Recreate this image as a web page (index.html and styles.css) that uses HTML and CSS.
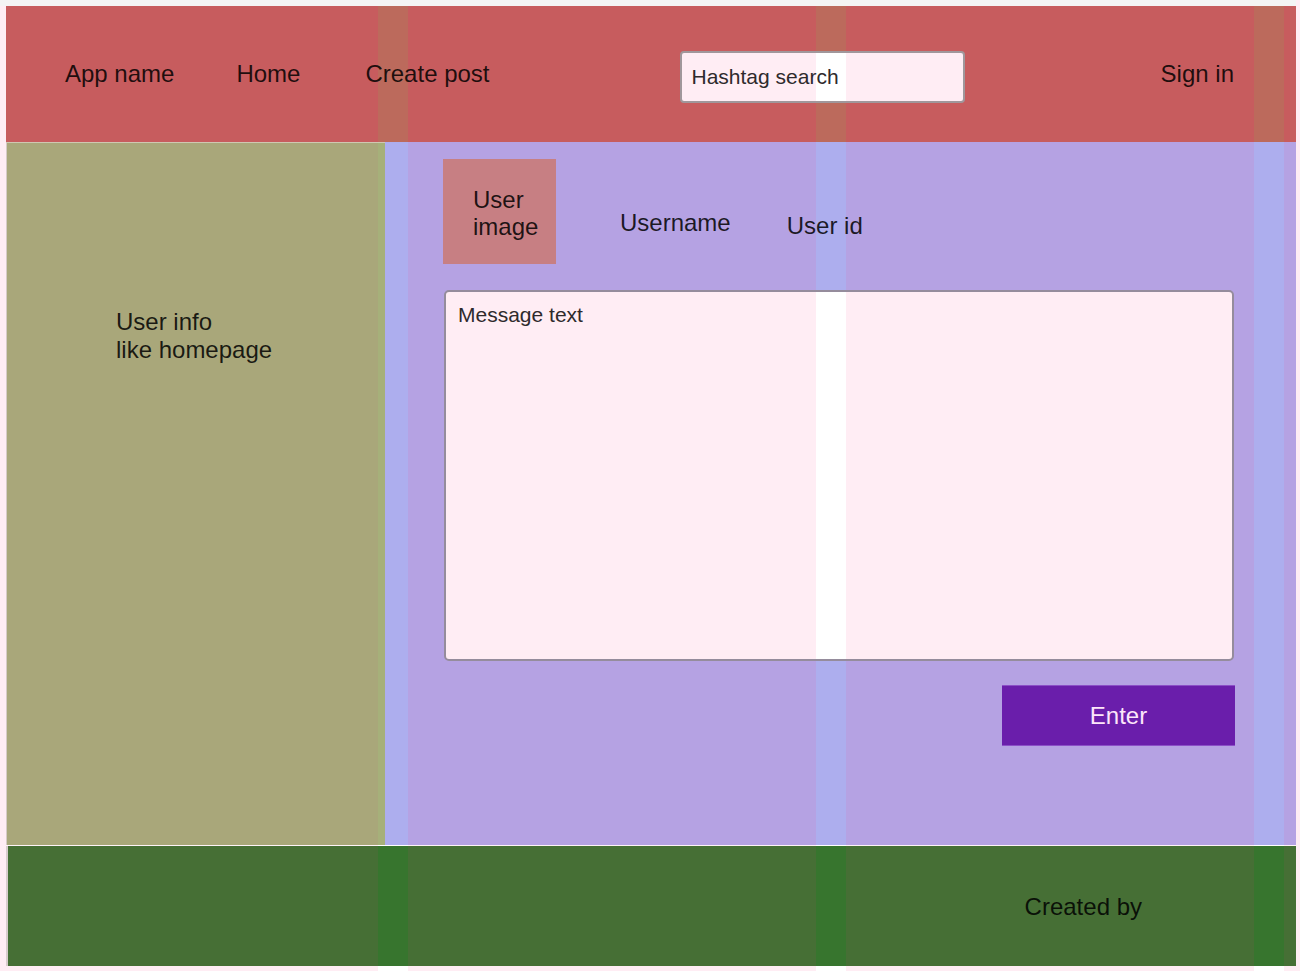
FILE: index.html
```html
<!DOCTYPE html>
<html lang="en">
<head>
<meta charset="utf-8">
<title>Create post</title>
<link rel="stylesheet" href="styles.css">
</head>
<body class="striped page-bg">
  <div class="topbar"></div>
  <div class="page">
    <header class="header striped">
      <a href="#" class="nav-item brand">App name</a>
      <a href="#" class="nav-item nav-home">Home</a>
      <a href="#" class="nav-item nav-create">Create post</a>
      <input class="search striped" type="text" placeholder="Hashtag search">
      <a href="#" class="nav-item signin">Sign in</a>
    </header>
    <div class="main">
      <aside class="sidebar striped">
        <p class="sidebar-text">User info<br>like homepage</p>
      </aside>
      <section class="content striped">
        <div class="post-head">
          <div class="avatar">User<br>image</div>
          <div class="username">Username</div>
          <div class="userid">User id</div>
        </div>
        <textarea class="message striped" placeholder="Message text"></textarea>
        <button class="enter" type="button">Enter</button>
      </section>
    </div>
    <footer class="footer striped">
      <span class="credits">Created by</span>
    </footer>
  </div>
</body>
</html>
```

FILE: styles.css
```css
html, body {
  margin: 0;
  padding: 0;
}

body {
  font-family: "Liberation Sans", Arial, sans-serif;
  color: rgba(0, 0, 0, 0.85);
  height: 971px;
  overflow: hidden;
}

/* column-grid overlay drawn into each surface */
.striped {
  background: linear-gradient(90deg,
      var(--base) 0 378px,
      var(--stripe) 378px 408px,
      var(--base) 408px 816px,
      var(--stripe) 816px 846px,
      var(--base) 846px 1254px,
      var(--stripe) 1254px 1284px,
      var(--base) 1284px) fixed;
}

.page-bg {
  --base: #ffedf4;
  --stripe: #ffffff;
}

.topbar {
  height: 6px;
  width: 1296px;
  background: #f4f4f4;
}

.page {
  margin-left: 6px;
  width: 1290px;
}

/* header */
.header {
  --base: #c75c5e;
  --stripe: #bc6a5c;
  height: 136px;
  display: flex;
  align-items: center;
  padding: 0 62px 0 59px;
  box-sizing: border-box;
}

.nav-item {
  font-size: 24px;
  color: rgba(0, 0, 0, 0.85);
  text-decoration: none;
  white-space: nowrap;
}

.nav-home { margin-left: 62px; }
.nav-create { margin-left: 65px; }
.signin { margin-left: auto; }

.search {
  --base: #ffedf4;
  --stripe: #ffffff;
  align-self: flex-start;
  margin: 45px 0 0 190px;
  width: 285px;
  height: 52px;
  box-sizing: border-box;
  border: 2px solid #a0979b;
  border-radius: 4px;
  padding: 0 10px;
  font-family: "Liberation Sans", Arial, sans-serif;
  font-size: 21px;
  color: #2e2a2c;
  outline: none;
}

.search::placeholder {
  color: #2e2a2c;
  opacity: 1;
}

/* main */
.main {
  display: flex;
  height: 704px;
  box-sizing: border-box;
  border-bottom: 1px solid rgba(255, 255, 255, 0.35);
}

.sidebar {
  --base: #a9a77a;
  --stripe: #a6b07a;
  width: 379px;
  box-sizing: border-box;
  border-left: 1px solid #d6cbc6;
  border-top: 1px solid #cfc8b2;
  padding: 165px 0 0 109px;
}

.sidebar-text {
  margin: 0;
  font-size: 24px;
  line-height: 28px;
}

.content {
  --base: #b5a2e3;
  --stripe: #adaeee;
  flex: 1;
  display: flex;
  flex-direction: column;
  padding: 17px 61px 0 59px;
}

.post-head {
  display: flex;
  align-items: flex-start;
  font-size: 24px;
  line-height: 28px;
}

.avatar {
  width: 113px;
  height: 105px;
  margin-left: -1px;
  box-sizing: border-box;
  padding: 27px 0 0 30px;
  background: #c77f83;
  line-height: 27px;
}

.username {
  margin: 50px 0 0 64px;
}

.userid {
  margin: 53px 0 0 56px;
}

.message {
  --base: #ffedf4;
  --stripe: #ffffff;
  margin-top: 26px;
  width: 790px;
  height: 371px;
  box-sizing: border-box;
  border: 2px solid #958c9c;
  border-radius: 5px;
  padding: 11px 12px;
  font-family: "Liberation Sans", Arial, sans-serif;
  font-size: 21px;
  color: #2e2a2c;
  resize: none;
  outline: none;
}

.message::placeholder {
  color: #2e2a2c;
  opacity: 1;
}

.enter {
  align-self: flex-end;
  margin-top: 24px;
  width: 233px;
  height: 61px;
  background: #6a1eab;
  color: #fde6fa;
  border: none;
  border-top: 1px solid #8c4fc7;
  border-bottom: 1px solid #8c4fc7;
  font-family: "Liberation Sans", Arial, sans-serif;
  font-size: 24px;
  padding: 0;
}

/* footer */
.footer {
  --base: #466f35;
  --stripe: #37752e;
  height: 120px;
  box-sizing: border-box;
  border-left: 2px solid #d8cccc;
  display: flex;
  align-items: center;
  justify-content: flex-end;
  padding: 2px 154px 0 0;
  font-size: 24px;
}
```
